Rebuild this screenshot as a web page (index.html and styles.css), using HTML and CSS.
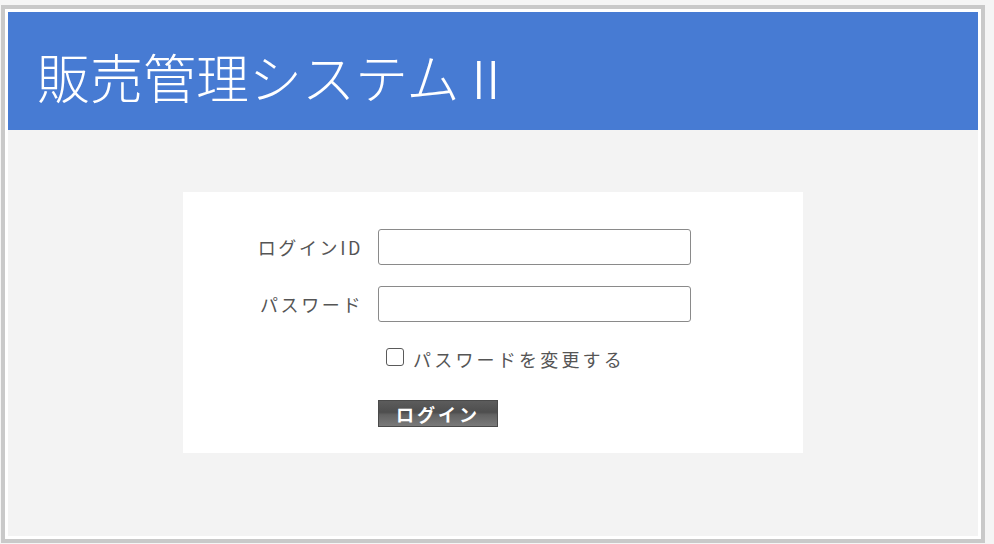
FILE: index.html
```html
<!DOCTYPE html>
<html lang="ja">
<head>
  <meta charset="UTF-8">
  <title>販売管理システムⅡ</title>
  <link rel="stylesheet" href="styles.css">
</head>
<body>

  <div class="frame">
    <header>販売管理システムⅡ</header>

    <main class="content">
      <form class="login-box" onsubmit="return false;">
        <div class="row">
          <label for="loginId">ログインID</label>
          <input type="text" id="loginId">
        </div>
        <div class="row">
          <label for="password">パスワード</label>
          <input type="password" id="password">
        </div>
        <div class="row check-row">
          <input type="checkbox" id="changePw">
          <label for="changePw">パスワードを変更する</label>
        </div>
        <div class="row button-row">
          <button type="submit">ログイン</button>
        </div>
      </form>
    </main>
  </div>

</body>
</html>
```

FILE: styles.css
```css
* {
  box-sizing: border-box;
}

body {
  margin: 0;
  font-family: "Noto Sans CJK JP", "Noto Sans", sans-serif;
  background: #f5f5f5;
  color: #555;
}

.frame {
  margin: 5px 9px 1px 1px;
  height: calc(100vh - 6px);
  border: 4px solid #c9c9c9;
  padding: 3px;
  background: #fff;
  display: flex;
  flex-direction: column;
}

header {
  background-color: #477bd3;
  color: #fff;
  height: 118px;
  padding: 38px 0 0 29px;
  font-size: 53px;
  font-weight: 300;
  line-height: 1;
  white-space: nowrap;
}

.content {
  flex: 1;
  background: #f3f3f3;
  padding-top: 62px;
}

.login-box {
  width: 620px;
  height: 261px;
  margin: 0 auto;
  background: #fff;
  padding-top: 37px;
}

.row {
  display: flex;
  align-items: center;
  margin-bottom: 21px;
}

.row label {
  width: 195px;
  padding-right: 15px;
  text-align: right;
  font-size: 18px;
  letter-spacing: 2.6px;
  color: #555;
}

.row input[type="text"],
.row input[type="password"] {
  width: 313px;
  height: 36px;
  border: 1px solid #8a8a8a;
  border-radius: 3px;
  background: #fff;
  font-size: 16px;
  padding: 0 6px;
  outline: none;
}

.check-row {
  margin-top: 26px;
  margin-bottom: 0;
  padding-left: 203px;
  height: 22px;
}

.check-row input[type="checkbox"] {
  -webkit-appearance: none;
  appearance: none;
  width: 18px;
  height: 18px;
  margin: 0 9px 0 0;
  border: 1.5px solid #5a5a5a;
  border-radius: 3px;
  background: #fff;
  position: relative;
  top: -2px;
}

.check-row label {
  width: auto;
  padding: 0;
  text-align: left;
  font-size: 18px;
  letter-spacing: 3.2px;
}

.button-row {
  margin: 30px 0 0 195px;
}

button {
  width: 120px;
  height: 27px;
  padding: 0;
  border: 1px solid #4a4a4a;
  background: linear-gradient(to bottom, #5c5c5c 0%, #4e4e4e 45%, #626262 55%, #7a7a7a 100%);
  color: #fff;
  font-family: "Noto Sans CJK JP", sans-serif;
  font-weight: bold;
  font-size: 18px;
  letter-spacing: 3px;
  line-height: 1;
  cursor: pointer;
}
```
